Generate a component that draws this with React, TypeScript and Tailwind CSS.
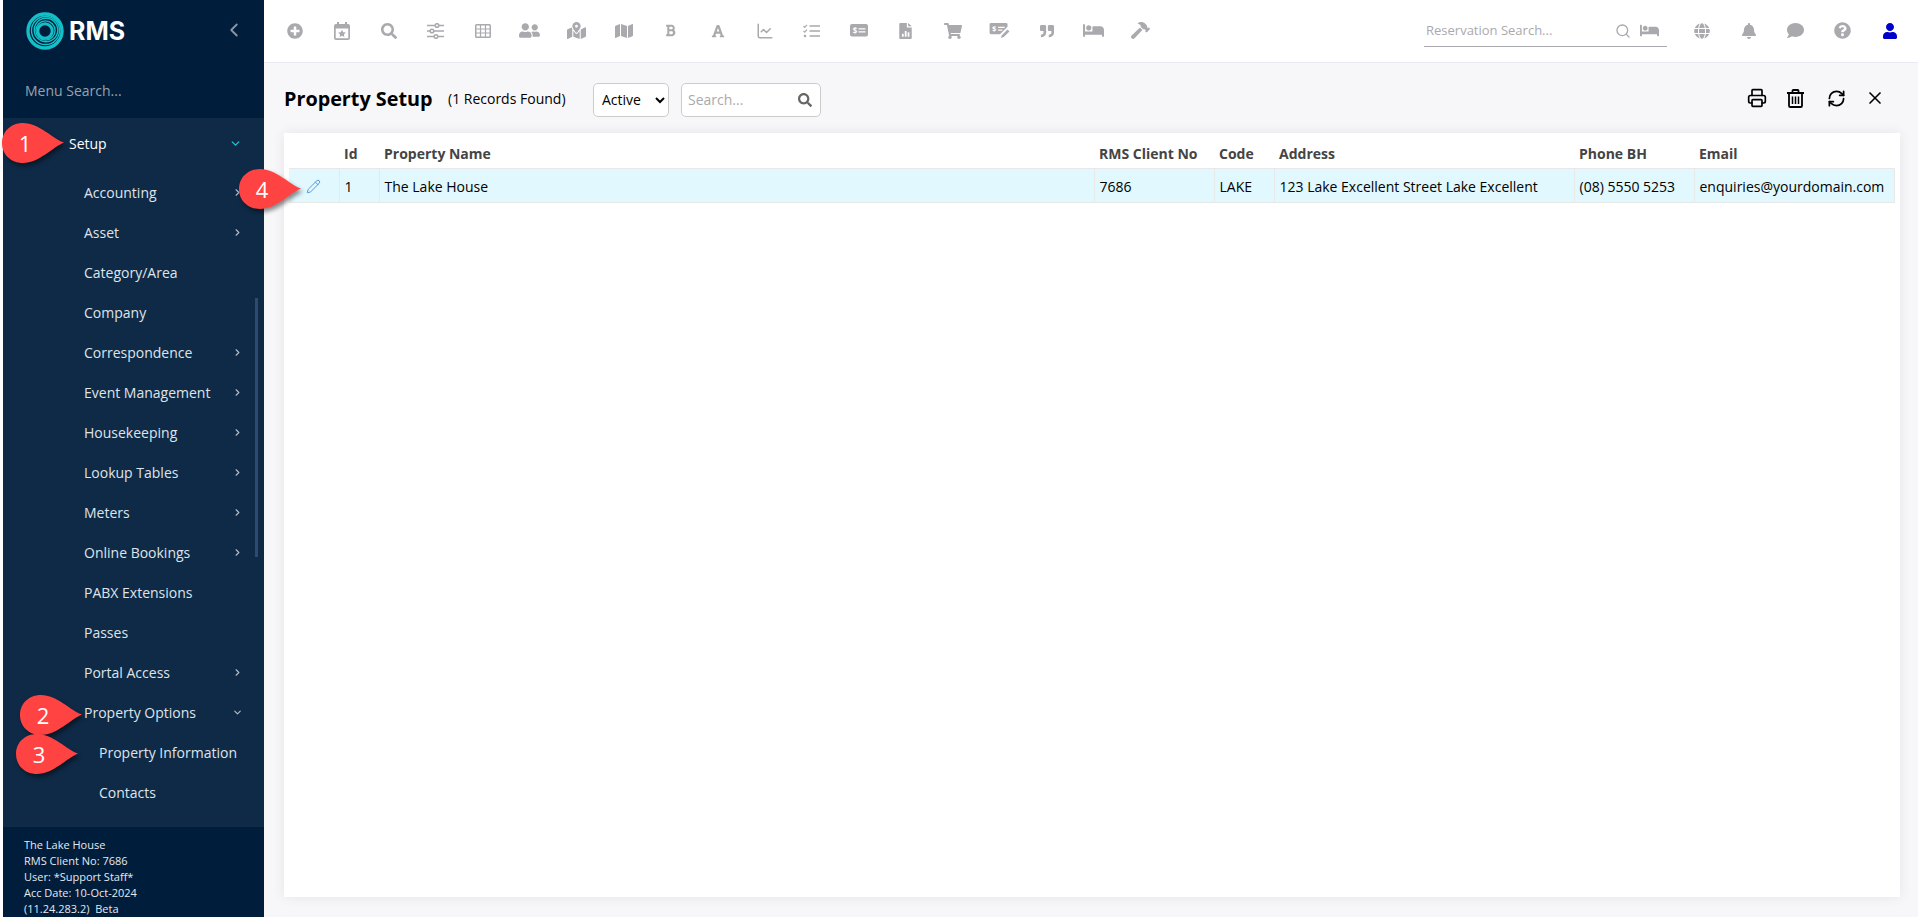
import React from "react";
import {
  FaPlusCircle, FaSearch, FaUserFriends, FaMapMarkedAlt, FaMap, FaBold, FaFont,
  FaShoppingCart, FaQuoteRight, FaBed, FaHammer, FaGlobe, FaBell, FaComment,
  FaQuestionCircle, FaUser,
} from "react-icons/fa";
import { ChevronDown, ChevronLeft, ChevronRight, Printer, RefreshCw, X, Pencil, Search, ChartLine } from "lucide-react";

const CalendarStar = () => (
  <svg width="16" height="18" viewBox="0 0 16 18" fill="#a9a9ae">
    <path fillRule="evenodd" d="M3 0h2v2h6V0h2v2h1a2 2 0 0 1 2 2v12a2 2 0 0 1-2 2H2a2 2 0 0 1-2-2V4a2 2 0 0 1 2-2h1V0ZM1.700 6.500V16c0 .2.100.3.300.3h12c.2 0 .3-.100.3-.3V6.500H1.700ZM8 7.800l1.200 2.400 2.600.4-1.900 1.800.5 2.600L8 13.800l-2.400 1.200.5-2.600-1.900-1.800 2.600-.4L8 7.800Z" />
  </svg>
);
const Sliders = () => (
  <svg width="17" height="16" viewBox="0 0 17 16" fill="none" stroke="#a9a9ae" strokeWidth="1.500">
    <path d="M0 2.500h8M12 2.500h5M0 8h3M7 8h10M0 13.500h7M11 13.500h6" />
    <circle cx="10" cy="2.500" r="1.800" />
    <circle cx="5" cy="8" r="1.800" />
    <circle cx="9" cy="13.500" r="1.800" />
  </svg>
);
const Grid = () => (
  <svg width="16" height="14" viewBox="0 0 16 14" fill="#a9a9ae">
    <path fillRule="evenodd" d="M1.500 0h13A1.500 1.500 0 0 1 16 1.500v11a1.500 1.500 0 0 1-1.500 1.500h-13A1.500 1.500 0 0 1 0 12.500v-11A1.500 1.500 0 0 1 1.500 0ZM1.500 1.600v2.900h3.400V1.600H1.500Zm4.600 0v2.900h3.800V1.600H6.100Zm5 0v2.900h3.400V1.600h-3.400ZM1.500 5.600v2.800h3.400V5.600H1.500Zm4.600 0v2.800h3.800V5.600H6.100Zm5 0v2.800h3.400V5.600h-3.400ZM1.500 9.500v2.900h3.400V9.500H1.500Zm4.600 0v2.900h3.800V9.500H6.100Zm5 0v2.900h3.400V9.500h-3.400Z" />
  </svg>
);
const Tasks = () => (
  <svg width="17" height="14" viewBox="0 0 17 14" fill="none" stroke="#a9a9ae">
    <path d="M6.500 2h10.500M6.500 7h10.500M6.500 12h10.500" strokeWidth="1.600" />
    <path d="M.500 2l1.300 1.300L4 .8M.500 6.800l1.300 1.300L4 5.600" strokeWidth="1.200" />
    <circle cx="2" cy="12" r="1.300" fill="#a9a9ae" stroke="none" />
  </svg>
);
const MoneyCard = () => (
  <svg width="18" height="13" viewBox="0 0 18 13" fill="#a9a9ae">
    <rect width="18" height="12.500" rx="2" />
    <path d="M8.500 4.300h7v1.300h-7zM8.500 7.200h7v1.300h-7z" fill="#fff" />
    <text x="2.800" y="9.500" fontSize="8" fontWeight="700" fill="#fff" fontFamily="Open Sans, sans-serif">$</text>
  </svg>
);
const FileChart = () => (
  <svg width="13" height="16" viewBox="0 0 14 18" fill="#a9a9ae">
    <path fillRule="evenodd" d="M1 0h7.500v5H14v12a1 1 0 0 1-1 1H1a1 1 0 0 1-1-1V1a1 1 0 0 1 1-1Zm9 0 4 3.600h-4V0ZM3 12v3.500h2V12H3Zm3.200-3v6.500h2V9h-2Zm3.200 1.500v5h2v-5h-2Z" />
  </svg>
);
const CheckEdit = () => (
  <svg width="21" height="17" viewBox="0 0 21 18" fill="#a9a9ae">
    <path d="M1.500 1h16A1.500 1.500 0 0 1 19 2.500V5l-8 8H1.500A1.500 1.500 0 0 1 0 11.500v-9A1.500 1.500 0 0 1 1.500 1Z" />
    <path d="M13 14l6-6 2 2-6 6-3 1 1-3Z" />
    <path d="M9 5h7v1.300H9zM9 8h4.500v1.300H9z" fill="#fff" />
    <text x="2.500" y="10" fontSize="8" fontWeight="700" fill="#fff" fontFamily="Open Sans, sans-serif">$</text>
  </svg>
);
const Trash = () => (
  <svg width="17" height="19" viewBox="0 0 17 19" fill="none" stroke="#000" strokeWidth="1.800">
    <path d="M0 4h17M5.500 4V1.800c0-.5.300-.8.800-.8h4.400c.5 0 .8.300.8.800V4" />
    <path d="M2 4v12.700c0 .8.500 1.300 1.300 1.300h10.400c.8 0 1.300-.5 1.300-1.300V4" />
    <path d="M5.500 7.500v7.500M8.500 7.500v7.500M11.500 7.500v7.500" strokeWidth="1.500" />
  </svg>
);
const Logo = () => (
  <svg width="38" height="38" viewBox="0 0 38 38" fill="none" stroke="#14c0c7">
    <circle cx="19" cy="19" r="17" strokeWidth="3.400" />
    <circle cx="19.500" cy="18.500" r="14" strokeWidth="1.400" />
    <circle cx="20" cy="18" r="11.800" strokeWidth="1.400" />
    <circle cx="19.500" cy="18.500" r="9.600" strokeWidth="1.400" />
    <circle cx="19" cy="19" r="7.200" strokeWidth="3" />
  </svg>
);

const gray = "#a9a9ae";
const toolIcons: React.ReactNode[] = [
  <FaPlusCircle size={16} color={gray} />,
  <CalendarStar />,
  <FaSearch size={16} color={gray} />,
  <Sliders />,
  <Grid />,
  <FaUserFriends size={21} color={gray} />,
  <FaMapMarkedAlt size={19} color={gray} />,
  <FaMap size={18} color={gray} />,
  <FaBold size={13} color={gray} />,
  <FaFont size={14} color={gray} />,
  <ChartLine size={18} color={gray} />,
  <Tasks />,
  <MoneyCard />,
  <FileChart />,
  <FaShoppingCart size={18} color={gray} />,
  <CheckEdit />,
  <FaQuoteRight size={14} color={gray} />,
  <FaBed size={21} color={gray} />,
  <FaHammer size={19} color={gray} />,
];

const menu: [string, boolean][] = [
  ["Accounting", true],
  ["Asset", true],
  ["Category/Area", false],
  ["Company", false],
  ["Correspondence", true],
  ["Event Management", true],
  ["Housekeeping", true],
  ["Lookup Tables", true],
  ["Meters", true],
  ["Online Bookings", true],
  ["PABX Extensions", false],
  ["Passes", false],
  ["Portal Access", true],
];

const Callout = ({ n, className }: { n: number; className: string }) => (
  <div className={`absolute w-[63px] h-[42px] ${className}`}>
    <svg width="63" height="42" viewBox="0 0 63 42" className="absolute inset-0 overflow-visible drop-shadow-[2px_3px_2px_rgba(0,0,0,0.45)]">
      <path d="M63 20.500C52 17 38 1 22 1 10 1 1 9.500 1 21s9 20 21 20c16 0 30-16 41-20.500Z" fill="#ff4343" />
    </svg>
    <span className="absolute left-0 top-0 w-[48px] h-[42px] flex items-center justify-center text-white text-[22px] leading-none">{n}</span>
  </div>
);

const th = "px-[5px] pt-[7px] text-left font-bold text-[#444] h-[35px] align-middle";
const td = "px-[5px] pt-[2px] border border-[#e8e8e8] border-l-0 align-middle h-[34px]";

export default function App() {
  return (
    <div className="relative flex w-[1918px] h-[917px] overflow-hidden bg-white font-['Open_Sans',sans-serif] text-[14px] text-black">
      <aside className="ml-[3px] w-[261px] shrink-0 flex flex-col bg-[#001d3b] relative">
        <div className="h-[62px] flex items-center pl-[23px] pr-[19px]">
          <Logo />
          <span className="ml-[5px] text-white text-[25px] font-bold font-['Inter',sans-serif] leading-none">RMS</span>
          <ChevronLeft size={22} color="#8d97a4" className="ml-auto -mt-[2px]" />
        </div>
        <div className="h-[56px] flex items-center pl-[22px] text-[#98a2ad]">Menu Search...</div>
        <nav className="flex-1 bg-[#0f2a47] text-[#dfe4ea] relative">
          <div className="h-[50px] flex items-center pl-[66px] pr-[22px] text-white mb-[4px]">
            <span>Setup</span>
            <ChevronDown size={13} color="#1bc3c9" strokeWidth={2.500} className="ml-auto" />
          </div>
          {menu.map(([label, arrow]) => (
            <div key={label} className="h-[40px] flex items-center pl-[81px] pr-[21px]">
              <span>{label}</span>
              {arrow && <ChevronRight size={11} color="#b4bcc6" strokeWidth={2.500} className="ml-auto" />}
            </div>
          ))}
          <div className="h-[40px] flex items-center pl-[81px] pr-[21px]">
            <span>Property Options</span>
            <ChevronDown size={11} color="#b4bcc6" strokeWidth={2.500} className="ml-auto" />
          </div>
          <div className="h-[40px] flex items-center pl-[96px]">Property Information</div>
          <div className="h-[40px] flex items-center pl-[96px]">Contacts</div>
          <div className="absolute left-[252px] top-[180px] w-[3px] h-[259px] bg-[#2f4a70]" />
        </nav>
        <div className="h-[90px] pl-[21px] pt-[10px] text-[11px] leading-[16px] text-[#e6e9ed]">
          <div>The Lake House</div>
          <div>RMS Client No: 7686</div>
          <div>User: *Support Staff*</div>
          <div>Acc Date: 10-Oct-2024</div>
          <div>(11.24.283.2)&nbsp; Beta</div>
        </div>
      </aside>

      <main className="flex-1 flex flex-col min-w-0 bg-[#f7f7f9]">
        <header className="h-[63px] shrink-0 bg-white border-b border-[#e9e9f1] flex items-center pl-[7px] pb-[1px]">
          {toolIcons.map((ic, i) => (
            <div key={i} className="w-[47px] flex items-center justify-center">{ic}</div>
          ))}
          <div className="ml-[260px] w-[243px] h-[32px] mt-[1px] border-b border-[#a9a9ae] flex items-center pl-[2px] text-[13px] text-[#a9a9ae]">
            <span>Reservation Search...</span>
            <Search size={16} color={gray} className="ml-auto" />
            <FaBed size={19} color={gray} className="ml-[9px] mr-[8px]" />
          </div>
          <div className="ml-[11px] flex items-center">
            <div className="w-[47px] flex justify-center"><FaGlobe size={16} color={gray} /></div>
            <div className="w-[47px] flex justify-center"><FaBell size={16} color={gray} /></div>
            <div className="w-[47px] flex justify-center"><FaComment size={17} color={gray} /></div>
            <div className="w-[47px] flex justify-center"><FaQuestionCircle size={17} color={gray} /></div>
            <div className="w-[47px] flex justify-center"><FaUser size={16} color="#0000c8" /></div>
          </div>
        </header>

        <div className="h-[70px] shrink-0 flex items-center pl-[20px] pr-[33px] pt-[3px]">
          <h1 className="text-[19.800px] font-bold leading-none w-[164px] -mt-[1px]">Property Setup</h1>
          <span className="text-[14px] w-[145px] -mt-[3px]">(1 Records Found)</span>
          <select className="w-[76px] h-[34px] bg-white border border-[#ccc] rounded-[5px] pl-[4px] text-[14px]" defaultValue="Active">
            <option>Active</option>
          </select>
          <div className="ml-[12px] w-[140px] h-[34px] bg-white border border-[#ccc] rounded-[5px] flex items-center pl-[6px] pr-[8px] text-[#aaa]">
            <span>Search...</span>
            <FaSearch size={14} color="#666" className="ml-auto" />
          </div>
          <div className="ml-auto flex items-center -mt-[3px]">
            <Printer size={20} color="#000" />
            <span className="ml-[20px] flex"><Trash /></span>
            <RefreshCw size={19} color="#000" strokeWidth={2.200} className="ml-[23px]" />
            <X size={20} color="#000" className="ml-[19px]" />
          </div>
        </div>

        <section className="ml-[20px] mr-[18px] h-[764px] bg-white shadow-[0_0_12px_rgba(0,0,0,0.08)] px-[5px]">
          <table className="table-fixed border-collapse w-[1605px]">
            <colgroup>
              <col className="w-[50px]" />
              <col className="w-[40px]" />
              <col className="w-[715px]" />
              <col className="w-[120px]" />
              <col className="w-[60px]" />
              <col className="w-[300px]" />
              <col className="w-[120px]" />
              <col className="w-[200px]" />
            </colgroup>
            <thead>
              <tr>
                <th className={th}></th>
                <th className={th}>Id</th>
                <th className={th}>Property Name</th>
                <th className={th}>RMS Client No</th>
                <th className={th}>Code</th>
                <th className={th}>Address</th>
                <th className={th}>Phone BH</th>
                <th className={th}>Email</th>
              </tr>
            </thead>
            <tbody>
              <tr className="bg-[#e1f8fe]">
                <td className={td}><div className="flex justify-end pr-[13px]"><Pencil size={15} color="#4a90d9" strokeWidth={1.500} /></div></td>
                <td className={td}>1</td>
                <td className={td}>The Lake House</td>
                <td className={td}>7686</td>
                <td className={td}>LAKE</td>
                <td className={td}>123 Lake Excellent Street Lake Excellent</td>
                <td className={td}>(08) 5550 5253</td>
                <td className={td}>enquiries@yourdomain.com</td>
              </tr>
            </tbody>
          </table>
        </section>
      </main>

      <Callout n={1} className="left-[1px] top-[122px]" />
      <Callout n={4} className="left-[238px] top-[168px]" />
      <Callout n={2} className="left-[19px] top-[694px]" />
      <Callout n={3} className="left-[15px] top-[733px]" />
    </div>
  );
}
